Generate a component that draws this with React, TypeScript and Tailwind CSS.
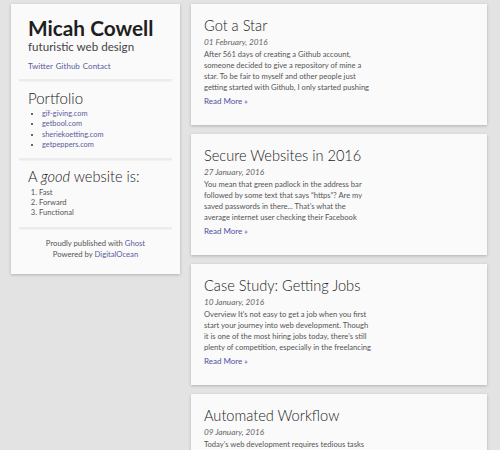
import React from "react";

const posts = [
  {
    title: "Got a Star",
    date: "01 February, 2016",
    lines: [
      "After 561 days of creating a Github account,",
      "someone decided to give a repository of mine a",
      "star. To be fair to myself and other people just",
      "getting started with Github, I only started pushing",
    ],
  },
  {
    title: "Secure Websites in 2016",
    date: "27 January, 2016",
    lines: [
      "You mean that green padlock in the address bar",
      "followed by some text that says \u201chttps\u201d? Are my",
      "saved passwords in there... That\u2019s what the",
      "average internet user checking their Facebook",
    ],
  },
  {
    title: "Case Study: Getting Jobs",
    date: "10 January, 2016",
    lines: [
      "Overview It\u2019s not easy to get a job when you first",
      "start your journey into web development. Though",
      "it is one of the most hiring jobs today, there\u2019s still",
      "plenty of competition, especially in the freelancing",
    ],
  },
  {
    title: "Automated Workflow",
    date: "09 January, 2016",
    lines: ["Today\u2019s web development requires tedious tasks"],
  },
];

function Divider() {
  return <div className="mx-[-9px] h-[2px] bg-[#ececec] shadow-[0_1px_1px_rgba(0,0,0,0.03)]" />;
}

export default function App() {
  return (
    <div
      className="h-[450px] overflow-hidden bg-[#e3e3e3] pl-[11px] pt-[4px] flex items-start gap-[11px]"
      style={{ fontFamily: "Lato, 'Noto Sans', sans-serif" }}
    >
      <aside className="w-[169px] shrink-0 bg-[#fafafa] shadow-[0_1px_3px_rgba(0,0,0,0.22)] px-[17px] pt-[12px] pb-[14px]">
        <h1 className="text-[20.8px] leading-[24px] font-bold text-[#1e1e1e]">Micah Cowell</h1>
        <p className="text-[11.6px] leading-[14px] text-[#444]">futuristic web design</p>
        <div className="mt-[6px] text-[8px] leading-[12px] text-[#5a5aa0] flex gap-[3px]">
          <span>Twitter</span>
          <span>Github</span>
          <span>Contact</span>
        </div>
        <div className="mt-[7px]">
          <Divider />
        </div>
        <div className="pt-[8px]">
          <h2 className="text-[15px] leading-[18px] font-light text-[#222]">Portfolio</h2>
          <ul className="mt-[2px] list-disc pl-[14px] text-[7.4px] leading-[10.3px] text-[#5a5aa0] marker:text-[#333]">
            <li>gif-giving.com</li>
            <li>getbool.com</li>
            <li>sheriekoetting.com</li>
            <li>getpeppers.com</li>
          </ul>
        </div>
        <div className="mt-[8px]">
          <Divider />
        </div>
        <div className="pt-[8px]">
          <h2 className="text-[14.6px] leading-[18px] font-light text-[#222]">
            A <em className="italic">good</em> website is:
          </h2>
          <ol className="mt-[1px] list-decimal pl-[11px] text-[7.6px] leading-[10px] text-[#555]">
            <li>Fast</li>
            <li>Forward</li>
            <li>Functional</li>
          </ol>
        </div>
        <div className="mt-[10px]">
          <Divider />
        </div>
        <div className="pt-[9px] text-center text-[7.7px] leading-[11px] text-[#555]">
          <p>
            Proudly published with <span className="text-[#5a5aa0]">Ghost</span>
          </p>
          <p>
            Powered by <span className="text-[#5a5aa0]">DigitalOcean</span>
          </p>
        </div>
      </aside>
      <main className="w-[296px] shrink-0 flex flex-col gap-[9px]">
        {posts.map((p) => (
          <article
            key={p.title}
            className="bg-[#fafafa] shadow-[0_1px_3px_rgba(0,0,0,0.22)] px-[13px] pt-[12px] pb-[18px]"
          >
            <h2 className="text-[14.6px] leading-[20px] font-light text-[#222]">{p.title}</h2>
            <p className="text-[8.2px] leading-[12px] italic text-[#666]">{p.date}</p>
            <p className="mt-[1px] text-[7.6px] leading-[11px] text-[#555] whitespace-nowrap">
              {p.lines.map((l, i) => (
                <span key={i} className="block">
                  {l}
                </span>
              ))}
            </p>
            <p className="mt-[2px] text-[8px] leading-[12px] text-[#4f4fa0]">Read More »</p>
          </article>
        ))}
      </main>
    </div>
  );
}
